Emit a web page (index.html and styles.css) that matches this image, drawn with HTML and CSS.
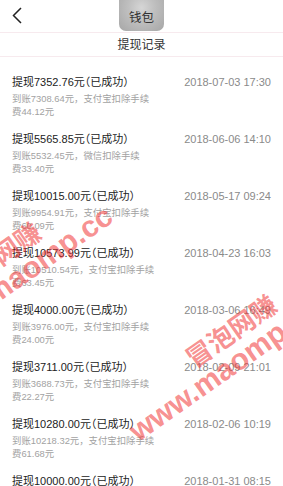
FILE: index.html
```html
<!DOCTYPE html>
<html lang="zh-CN">
<head>
<meta charset="utf-8">
<title>提现记录</title>
<link rel="stylesheet" href="styles.css">
</head>
<body>
<div class="page">
  <header class="topbar">
    <div class="back">
      <svg width="12" height="17" viewBox="0 0 12 17"><polyline points="10,1 2.5,8.5 10,16" fill="none" stroke="#222" stroke-width="1.5"/></svg>
    </div>
    <div class="badge">钱包</div>
    <div></div>
  </header>
  <div class="titlebar">提现记录</div>
  <main class="list">
    <div class="record">
      <div class="record-main">
        <div class="record-title">提现7352.76元（已成功）</div>
        <div class="record-desc">到账7308.64元，支付宝扣除手续<br>费44.12元</div>
      </div>
      <div class="record-time">2018-07-03 17:30</div>
    </div>
    <div class="record">
      <div class="record-main">
        <div class="record-title">提现5565.85元（已成功）</div>
        <div class="record-desc">到账5532.45元，微信扣除手续<br>费33.40元</div>
      </div>
      <div class="record-time">2018-06-06 14:10</div>
    </div>
    <div class="record">
      <div class="record-main">
        <div class="record-title">提现10015.00元（已成功）</div>
        <div class="record-desc">到账9954.91元，支付宝扣除手续<br>费60.09元</div>
      </div>
      <div class="record-time">2018-05-17 09:24</div>
    </div>
    <div class="record">
      <div class="record-main">
        <div class="record-title">提现10573.99元（已成功）</div>
        <div class="record-desc">到账10510.54元，支付宝扣除手续<br>费63.45元</div>
      </div>
      <div class="record-time">2018-04-23 16:03</div>
    </div>
    <div class="record">
      <div class="record-main">
        <div class="record-title">提现4000.00元（已成功）</div>
        <div class="record-desc">到账3976.00元，支付宝扣除手续<br>费24.00元</div>
      </div>
      <div class="record-time">2018-03-06 16:49</div>
    </div>
    <div class="record">
      <div class="record-main">
        <div class="record-title">提现3711.00元（已成功）</div>
        <div class="record-desc">到账3688.73元，支付宝扣除手续<br>费22.27元</div>
      </div>
      <div class="record-time">2018-02-09 21:01</div>
    </div>
    <div class="record">
      <div class="record-main">
        <div class="record-title">提现10280.00元（已成功）</div>
        <div class="record-desc">到账10218.32元，支付宝扣除手续<br>费61.68元</div>
      </div>
      <div class="record-time">2018-02-06 10:19</div>
    </div>
    <div class="record">
      <div class="record-main">
        <div class="record-title">提现10000.00元（已成功）</div>
        <div class="record-desc">到账9940.00元，支付宝扣除手续<br>费60.00元</div>
      </div>
      <div class="record-time">2018-01-31 08:15</div>
    </div>
  </main>
  <div class="watermark watermark-left">
    <div class="wm-line1 wm-line1-left">冒泡网赚</div>
    <div class="wm-line2">www.maomp.cc</div>
  </div>
  <div class="watermark watermark-right">
    <div class="wm-line1">冒泡网赚</div>
    <div class="wm-line2">www.maomp.cc</div>
  </div>
</div>
</body>
</html>
```
FILE: styles.css
```css
html, body {
  margin: 0;
  padding: 0;
  background: #fff;
  overflow: hidden;
}
body {
  font-family: "Liberation Sans", "Noto Sans CJK SC", sans-serif;
  width: 283px;
  height: 486px;
}
.page {
  position: relative;
  width: 283px;
  height: 486px;
  overflow: hidden;
}
.topbar {
  height: 32px;
  display: grid;
  grid-template-columns: 1fr auto 1fr;
  align-items: start;
  border-bottom: 1px solid #f7eaee;
}
.back {
  padding: 7px 0 0 11px;
}
.back svg {
  display: block;
}
.badge {
  width: 45px;
  height: 31px;
  border-radius: 0 0 7px 7px;
  background: radial-gradient(ellipse at 50% 25%, #d6d6d6 0%, #c0c0c0 40%, #a6a6a6 100%);
  color: #333;
  font-size: 12.5px;
  line-height: 34px;
  text-align: center;
  font-family: "Noto Sans CJK SC", sans-serif;
}
.titlebar {
  height: 23px;
  line-height: 22px;
  text-align: center;
  font-size: 12px;
  color: #333;
  font-family: "Noto Sans CJK SC", sans-serif;
  border-bottom: 1px solid #f7eaee;
}
.list {
  padding-top: 11px;
}
.record {
  display: flex;
  justify-content: space-between;
  align-items: flex-start;
  padding: 6px 12px 7px 12px;
}
.record-title {
  font-size: 11px;
  line-height: 16px;
  color: #222;
  white-space: nowrap;
  font-feature-settings: "halt";
}
.record-desc {
  margin-top: 2px;
  font-size: 9.4px;
  line-height: 13px;
  color: #a2a2a2;
  white-space: nowrap;
}
.record-time {
  font-size: 11px;
  line-height: 16px;
  color: #8a8a8a;
  white-space: nowrap;
}
.watermark {
  position: absolute;
  transform: rotate(-35deg);
  transform-origin: 0 0;
  color: rgba(240, 50, 50, 0.55);
  font-weight: bold;
  white-space: nowrap;
  pointer-events: none;
}
.watermark-right {
  left: 98px;
  top: 385px;
}
.watermark-left {
  left: -110px;
  top: 293px;
}
.wm-line1 {
  font-family: "Noto Sans CJK SC", sans-serif;
  font-size: 26px;
  line-height: 18px;
  padding-top: 22px;
  padding-left: 88px;
}
.wm-line1-left {
  padding-left: 54px;
}
.wm-line2 {
  font-family: "Liberation Sans", sans-serif;
  font-size: 30px;
  line-height: 40px;
}
```
